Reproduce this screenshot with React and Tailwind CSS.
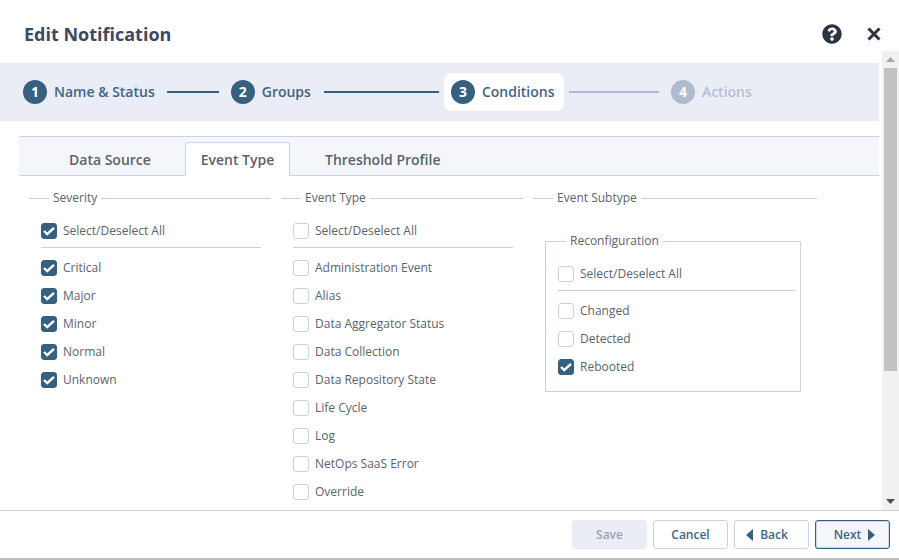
import { FaQuestionCircle } from "react-icons/fa";

const severity = ["Critical", "Major", "Minor", "Normal", "Unknown"];
const eventTypes = [
  "Administration Event",
  "Alias",
  "Data Aggregator Status",
  "Data Collection",
  "Data Repository State",
  "Life Cycle",
  "Log",
  "NetOps SaaS Error",
  "Override",
];
const subtypes = [
  { label: "Changed" },
  { label: "Detected" },
  { label: "Rebooted", checked: true },
];

function Check({ label, checked }) {
  return (
    <label className="flex items-center h-7 gap-1.5 text-xs text-[#5c626d]">
      <span
        className={`w-4 h-4 shrink-0 rounded-[3px] border flex items-center justify-center ${
          checked ? "bg-[#36607f] border-[#36607f]" : "bg-white border-[#c9d2e3]"
        }`}
      >
        {checked && (
          <svg width="12" height="10" viewBox="0 0 12 10" fill="none">
            <path d="M1 5l3.200 3.200L11 1.800" stroke="white" strokeWidth="2.400" />
          </svg>
        )}
      </span>
      {label}
    </label>
  );
}

function Step({ n, label, disabled }) {
  return (
    <div className="flex items-center gap-[7px]">
      <span
        className={`w-6 h-6 rounded-full flex items-center justify-center text-sm font-bold text-white ${
          disabled ? "bg-[#b0bbcf]" : "bg-[#36607f]"
        }`}
      >
        {n}
      </span>
      <span className={`text-sm font-semibold ${disabled ? "text-[#b4bfd1]" : "text-[#3f6584]"}`}>{label}</span>
    </div>
  );
}

function Btn({ children, className }) {
  return (
    <button className={`w-[75px] h-[29px] rounded-[3px] border text-xs font-semibold flex items-center justify-center gap-[7px] ${className}`}>
      {children}
    </button>
  );
}

function Caret({ left }) {
  return (
    <svg width="7" height="12" viewBox="0 0 7 12" fill="#36607f">
      <path d={left ? "M7 0v12L0 6z" : "M0 0v12l7-6z"} />
    </svg>
  );
}

export default function App() {
  return (
    <div className="w-[899px] h-[560px] bg-white flex flex-col overflow-hidden font-['Open_Sans',sans-serif]">
      <div className="h-[51px] shrink-0 flex items-center justify-between pl-6 pr-[18px] pt-4">
        <h1 className="text-lg font-bold text-[#3e4a5b]">Edit Notification</h1>
        <div className="flex items-center gap-[25px] text-[#2e3440]">
          <FaQuestionCircle size={20} />
          <svg width="14" height="14" viewBox="0 0 14 14" fill="none">
            <path d="M1.5 1.5l11 11M12.5 1.5l-11 11" stroke="currentColor" strokeWidth="3" />
          </svg>
        </div>
      </div>

      <div className="h-[459px] flex">
        <div className="w-[879px] overflow-hidden pt-3">
          <div className="h-[58px] bg-[#eaedf5] flex items-center pl-[23px]">
            <Step n="1" label="Name & Status" />
            <span className="w-[52px] h-0.5 bg-[#36607f] ml-3" />
            <div className="ml-3"><Step n="2" label="Groups" /></div>
            <span className="w-[115px] h-0.5 bg-[#36607f] ml-[13px]" />
            <div className="ml-[5px] h-[38px] w-[120px] bg-white rounded-lg pl-[7px] flex items-center">
              <Step n="3" label="Conditions" />
            </div>
            <span className="w-[90px] h-0.5 bg-[#b0bbcf] ml-[5px]" />
            <div className="ml-3"><Step n="4" label="Actions" disabled /></div>
          </div>

          <div className="ml-[19px] mt-[15px] h-10 bg-[#f5f6fb] border-y border-[#c9d5e6] flex items-end text-sm font-semibold text-[#5c626d]">
            <div className="w-[166px] h-[33px] pl-[50px] pt-0.5 flex items-center">Data Source</div>
            <div className="w-[105px] h-[34px] -mb-px bg-white border border-b-0 border-[#c9d5e6] rounded-t-[3px] flex items-center justify-center">Event Type</div>
            <div className="h-[33px] pl-[35px] pt-0.5 flex items-center">Threshold Profile</div>
          </div>

          <div className="flex gap-2.5 pl-[29px] mt-[14px] text-xs">
            <fieldset className="w-[242px] border-t border-[#c9d2e3]">
              <legend className="ml-5 px-1 text-[#5c626d]">Severity</legend>
              <div className="pl-3 pr-2.5 pt-[11px]">
                <Check label="Select/Deselect All" checked />
                <div className="border-t border-[#c9d2e3] mt-[2px] mb-1.5" />
                {severity.map((s) => <Check key={s} label={s} checked />)}
              </div>
            </fieldset>
            <fieldset className="w-[242px] border-t border-[#c9d2e3]">
              <legend className="ml-5 px-1 text-[#5c626d]">Event Type</legend>
              <div className="pl-3 pr-2.5 pt-[11px]">
                <Check label="Select/Deselect All" />
                <div className="border-t border-[#c9d2e3] mt-[2px] mb-1.5" />
                {eventTypes.map((s) => <Check key={s} label={s} />)}
              </div>
            </fieldset>
            <fieldset className="w-[284px] border-t border-[#c9d2e3]">
              <legend className="ml-5 px-1 text-[#5c626d]">Event Subtype</legend>
              <fieldset className="ml-3 mt-[27px] w-[256px] h-[159px] border border-[#c9d2e3] pl-3 pr-1">
                <legend className="ml-2 px-1 text-[#5c626d]">Reconfiguration</legend>
                <div className="pt-[11px]">
                  <Check label="Select/Deselect All" />
                  <div className="border-t border-[#c9d2e3] mt-[2px] mb-1.5" />
                  {subtypes.map((s) => <Check key={s.label} label={s.label} checked={s.checked} />)}
                </div>
              </fieldset>
            </fieldset>
          </div>
        </div>

        <div className="ml-[3px] w-[17px] bg-[#f1f1f1] flex flex-col items-center">
          <div className="h-[17px] flex items-center justify-center">
            <svg width="9" height="5" viewBox="0 0 9 5" fill="#a8a8a8"><path d="M4.500 0L9 5H0z" /></svg>
          </div>
          <div className="w-[13px] h-[303px] bg-[#c1c1c1]" />
          <div className="flex-1" />
          <div className="h-[17px] flex items-center justify-center">
            <svg width="9" height="5" viewBox="0 0 9 5" fill="#505050"><path d="M0 0h9L4.500 5z" /></svg>
          </div>
        </div>
      </div>

      <div className="h-12 border-t border-[#c9d2e3] flex items-start justify-end gap-1.5 pt-[9px] pr-[9px]">
        <Btn className="bg-[#eaedf5] border-[#eaedf5] text-[#9aa3b2]">Save</Btn>
        <Btn className="bg-white border-[#c9d5e6] text-[#3f6584]">Cancel</Btn>
        <Btn className="bg-white border-[#c9d5e6] text-[#3f6584] pr-[9px]"><Caret left />Back</Btn>
        <Btn className="bg-[#f5f6fb] border-[#36607f] text-[#3f6584] shadow-[inset_0_0_0_1px_#c9d5e6] pl-1">Next<Caret /></Btn>
      </div>
      <div className="h-0.5 bg-[#bdbdbd]" />
    </div>
  );
}
